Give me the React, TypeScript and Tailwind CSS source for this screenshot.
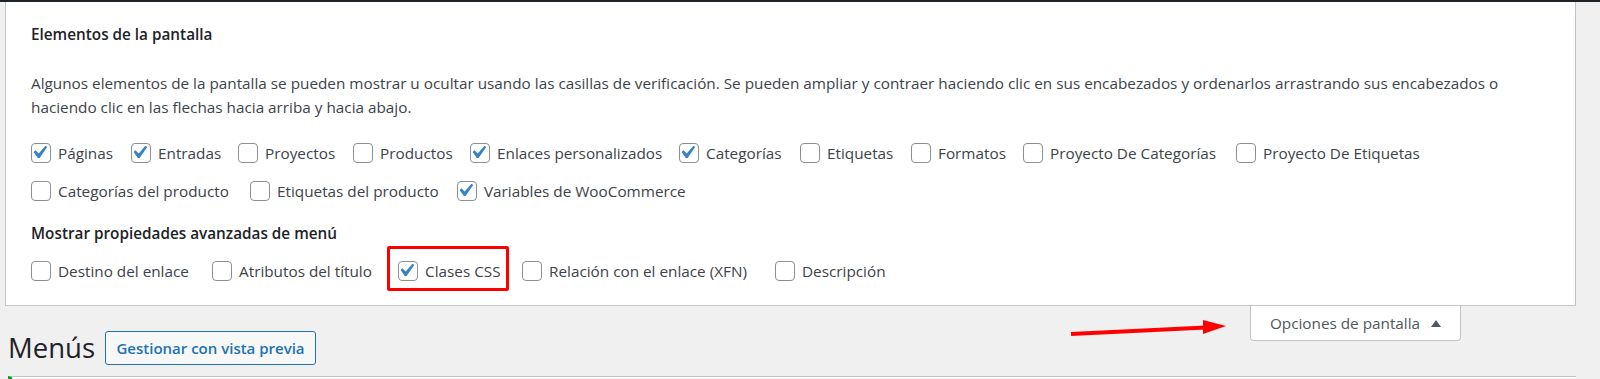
import React from "react";

const FONT = { fontFamily: '"Open Sans", "Noto Sans", sans-serif' };

function Check({ checked }: { checked: boolean }) {
  return (
    <span className="flex h-[20px] w-[20px] shrink-0 items-center justify-center rounded-[4px] border border-[#8c8f94] bg-white">
      {checked && (
        <svg viewBox="3.81 2.86 15.24 15.24" className="h-[20px] w-[20px] overflow-visible">
          <path d="M14.83 4.89l1.34.94-5.81 8.38H9.02L5.78 9.67l1.34-1.25 2.57 2.4z" fill="#3582c4" />
        </svg>
      )}
    </span>
  );
}

type Item = { label: string; checked: boolean };

function Row({ items, widths }: { items: Item[]; widths: string[] }) {
  return (
    <div className="flex h-[38px] items-center">
      {items.map((it, i) => (
        <label key={it.label} className={`flex shrink-0 items-center gap-[7px] ${widths[i] ?? ""}`}>
          <Check checked={it.checked} />
          <span className="whitespace-nowrap">{it.label}</span>
        </label>
      ))}
    </div>
  );
}

export default function App() {
  const row1: Item[] = [
    { label: "Páginas", checked: true },
    { label: "Entradas", checked: true },
    { label: "Proyectos", checked: false },
    { label: "Productos", checked: false },
    { label: "Enlaces personalizados", checked: true },
    { label: "Categorías", checked: true },
    { label: "Etiquetas", checked: false },
    { label: "Formatos", checked: false },
    { label: "Proyecto De Categorías", checked: false },
    { label: "Proyecto De Etiquetas", checked: false },
  ];
  const row1w = [
    "w-[100px]",
    "w-[107px]",
    "w-[115px]",
    "w-[117px]",
    "w-[209px]",
    "w-[121px]",
    "w-[111px]",
    "w-[112px]",
    "w-[213px]",
    "",
  ];
  const row2: Item[] = [
    { label: "Categorías del producto", checked: false },
    { label: "Etiquetas del producto", checked: false },
    { label: "Variables de WooCommerce", checked: true },
  ];
  const row2w = ["w-[219px]", "w-[207px]", ""];

  return (
    <div
      className="relative h-[379px] w-[1600px] overflow-hidden bg-[#f0f0f1] text-[15.3px] text-[#3c434a]"
      style={FONT}
    >
      <div className="h-[2px] bg-[#1d2327]" />
      {/* Screen options panel */}
      <div className="ml-[5px] mr-[24px] border-x border-b border-[#c3c4c7] bg-white pb-[15px] pl-[25px] pt-[20px]">
        <div className="flex h-[24px] items-center font-semibold text-[#1d2327]">Elementos de la pantalla</div>
        <p className="mt-[25px] whitespace-nowrap leading-[24px]">
          Algunos elementos de la pantalla se pueden mostrar u ocultar usando las casillas de verificación. Se pueden
          ampliar y contraer haciendo clic en sus encabezados y ordenarlos arrastrando sus encabezados o
          <br />
          haciendo clic en las flechas hacia arriba y hacia abajo.
        </p>
        <div className="mt-[15px]">
          <Row items={row1} widths={row1w} />
          <Row items={row2} widths={row2w} />
        </div>
        <div className="mt-[11px] flex h-[24px] items-center font-semibold text-[#1d2327]">
          Mostrar propiedades avanzadas de menú
        </div>
        <div className="mt-[7px] flex h-[38px] items-center">
          <label className="flex w-[181px] shrink-0 items-center gap-[7px]">
            <Check checked={false} />
            <span className="whitespace-nowrap">Destino del enlace</span>
          </label>
          <label className="flex w-[186px] shrink-0 items-center gap-[7px]">
            <Check checked={false} />
            <span className="whitespace-nowrap">Atributos del título</span>
          </label>
          <label className="relative flex h-[38px] w-[124px] shrink-0 items-center gap-[7px]">
            <Check checked={true} />
            <span className="whitespace-nowrap">Clases CSS</span>
            <span className="pointer-events-none absolute left-[-11px] top-[-6px] h-[45px] w-[122px] rounded-[2px] border-[3px] border-[#ff0000]" />
          </label>
          <label className="flex w-[253px] shrink-0 items-center gap-[7px]">
            <Check checked={false} />
            <span className="whitespace-nowrap">Relación con el enlace (XFN)</span>
          </label>
          <label className="flex shrink-0 items-center gap-[7px]">
            <Check checked={false} />
            <span className="whitespace-nowrap">Descripción</span>
          </label>
        </div>
      </div>

      {/* Heading row + tab */}
      <div className="flex items-start justify-between">
        <div className="ml-[8px] mt-[24px] flex items-center gap-[10px]">
          <h1 className="text-[27.5px] leading-[36px] text-[#1d2327]">Menús</h1>
          <button className="flex h-[34px] w-[211px] items-center justify-center rounded-[3px] border border-[#2271b1] bg-[#f6f7f7] text-[15px] font-semibold text-[#2271b1]">
            Gestionar con vista previa
          </button>
        </div>
        <div className="mr-[139px] flex h-[35px] w-[211px] items-center justify-center gap-[11px] rounded-b-[4px] border-x border-b border-[#c3c4c7] bg-white text-[#50575e]">
          <span className="whitespace-nowrap">Opciones de pantalla</span>
          <svg width="10" height="7" viewBox="0 0 10 7">
            <path d="M5 0L10 7H0z" fill="#50575e" />
          </svg>
        </div>
      </div>

      {/* Next box */}
      <div className="ml-[8px] mr-[24px] mt-[10px] h-[10px] border-l-4 border-t border-l-[#00a32a] border-t-[#c3c4c7] bg-white" />

      {/* Red arrow annotation */}
      <svg className="pointer-events-none absolute left-0 top-0" width="1600" height="379">
        <line x1="1071" y1="334" x2="1206" y2="327.5" stroke="#ff0000" strokeWidth="4" />
        <path d="M1203 320 L1226 326 L1203 334 Z" fill="#ff0000" />
      </svg>
    </div>
  );
}
